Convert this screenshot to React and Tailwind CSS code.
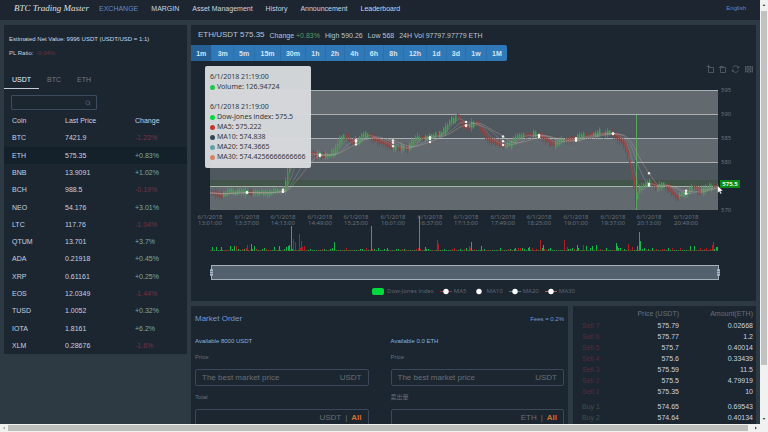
import React, { useState } from 'react';
import { Search } from 'lucide-react';

const NAV = ['EXCHANGE', 'MARGIN', 'Asset Management', 'History', 'Announcement', 'Leaderboard'];
const INTERVALS = ['1m', '3m', '5m', '15m', '30m', '1h', '2h', '4h', '6h', '8h', '12h', '1d', '3d', '1w', '1M'];

const COINS = [
  ['BTC', '7421.9', '-1.23%'],
  ['ETH', '575.35', '+0.83%'],
  ['BNB', '13.9091', '+1.02%'],
  ['BCH', '988.5', '-0.19%'],
  ['NEO', '54.176', '+3.01%'],
  ['LTC', '117.76', '-1.04%'],
  ['QTUM', '13.701', '+3.7%'],
  ['ADA', '0.21918', '+0.45%'],
  ['XRP', '0.61161', '+0.25%'],
  ['EOS', '12.0349', '-1.44%'],
  ['TUSD', '1.0052', '+0.32%'],
  ['IOTA', '1.8161', '+6.2%'],
  ['XLM', '0.28676', '-1.6%'],
];

const SELLS = [
  ['Sell 7', '575.79', '0.02668'],
  ['Sell 6', '575.77', '1.2'],
  ['Sell 5', '575.7', '0.40014'],
  ['Sell 4', '575.6', '0.33439'],
  ['Sell 3', '575.59', '11.5'],
  ['Sell 2', '575.5', '4.79919'],
  ['Sell 1', '575.35', '10'],
];

const BUYS = [
  ['Buy 1', '574.65', '0.69543'],
  ['Buy 2', '574.64', '0.40134'],
];

const TOOLTIP_ROWS = [
  ['#00da3c', 'Dow-Jones index: 575.5'],
  ['#c23531', 'MA5: 575.222'],
  ['#2f4554', 'MA10: 574.838'],
  ['#61a0a8', 'MA20: 574.3665'],
  ['#d48265', 'MA30: 574.4256666666666'],
];

const TIMES = ['13:01', '13:37', '14:13', '14:49', '15:25', '16:01', '16:37', '17:13', '17:49', '18:25', '19:01', '19:37', '20:13', '20:49'];

// price shape, chart coordinates
const SHAPE = [
  [210, 193], [220, 195], [230, 192], [240, 192], [250, 193], [262, 193], [272, 192], [284, 189], [286, 186],
  [288, 168], [292, 160], [300, 155], [310, 153], [318, 156], [330, 155], [337, 147], [341, 139], [345, 136],
  [352, 142], [358, 141], [362, 135], [370, 136], [378, 140], [390, 146], [400, 148], [408, 149], [413, 142],
  [418, 138], [430, 137], [440, 134], [446, 127], [452, 120], [457, 116], [462, 125], [468, 128], [475, 122],
  [481, 130], [485, 136], [490, 140], [500, 145], [508, 146], [513, 141], [520, 136], [530, 135], [540, 135],
  [547, 140], [553, 145], [560, 141], [570, 139], [580, 137], [590, 135], [600, 133], [610, 133], [616, 136],
  [622, 141], [626, 150], [629, 165], [633, 184], [636, 198], [639, 188], [643, 185], [650, 183], [656, 188],
  [664, 184], [668, 188], [673, 194], [677, 197], [685, 193], [693, 187], [700, 191], [710, 187], [718, 186],
];

const noise = (n) => {
  const v = Math.sin(n * 12.9898) * 43758.5453;
  return v - Math.floor(v);
};

function priceAt(x) {
  for (let i = 1; i < SHAPE.length; i++) {
    const [x0, y0] = SHAPE[i - 1];
    const [x1, y1] = SHAPE[i];
    if (x <= x1) return y0 + ((y1 - y0) * (x - x0)) / (x1 - x0);
  }
  return 186;
}

const candles = [];
for (let x = 211; x < 718; x += 2) {
  const slope = priceAt(x + 2) - priceAt(x - 2);
  const up = slope + (noise(Math.floor(x / 4)) - 0.5) * 3 < 0;
  const body = 2 + noise(x + 0.3) * 4 + Math.min(Math.abs(slope) / 2, 6);
  const wick = body + 1 + noise(x + 0.7) * 6;
  candles.push({ x, mid: priceAt(x) + (noise(x + 0.9) - 0.5) * 3, body, wick, up });
}

function average(x, n) {
  let sum = 0;
  for (let i = 0; i < n; i++) sum += priceAt(Math.max(210, x - i));
  return sum / n;
}

const AVERAGES = [
  [5, '#b5584f'],
  [10, '#8f9ba3'],
  [20, '#8fb0b5'],
  [30, '#d4a898'],
].map(([n, color]) => {
  let d = '';
  for (let x = 210; x <= 718; x += 2) d += `${d ? 'L' : 'M'}${x} ${average(x, n).toFixed(1)}`;
  return { n, color, d };
});

// tall volume bars: x, height, rising
const SPIKES = [
  [221, 4, true], [247, 6, false], [251, 7, true], [279, 5, true], [289, 6, true], [291, 25, true],
  [293, 12, false], [295, 9, false], [299, 17, false], [301, 10, false], [304, 5, false], [334, 9, true],
  [371, 25, true], [387, 3, true], [419, 35, true], [425, 4, true], [437, 11, false], [438, 7, false],
  [469, 5, false], [471, 9, true], [481, 5, true], [515, 3, true], [529, 4, true], [540, 11, false],
  [543, 6, true], [564, 11, false], [567, 4, false], [577, 6, true], [583, 6, false], [586, 5, true],
  [592, 5, true], [596, 6, true], [616, 8, true], [617, 5, true], [628, 7, false], [632, 4, false],
  [637, 5, true], [639, 19, true], [640, 10, true], [690, 5, true], [694, 5, true], [712, 6, false],
  [713, 9, false], [716, 4, true], [717, 4, true],
];

const volumes = [];
for (let x = 210; x < 718; x += 2) {
  const busy = x < 308 || (x > 570 && x < 600) || x > 705;
  volumes.push([x, 1 + Math.floor(noise(x + 0.5) ** 3 * (busy ? 5 : 3)), noise(x + 0.2) > 0.5]);
}

const DOTS = TIMES.slice(1).map((t, i) => Math.round(210 + (i + 1) * 36.6));

function Chart() {
  return (
    <svg viewBox="191 61 565 223" className="block w-full font-['Noto_Sans',sans-serif]">
      {/* toolbox */}
      <g fill="none" stroke="#59626b" strokeWidth="0.8">
        <path d="M708.500 67.500h5v5h-5zM706.800 66.500h3M708.500 64.800v3" />
        <path d="M725.500 67.500v5h-5v-5zM719 68.200l1.500-2 1.500 2M720.500 66.500h3" />
        <path d="M732.800 67.500a3 3 0 0 1 5.400 0M738.400 70.500a3 3 0 0 1-5.600 0M738.800 66v2h-1.800M732.200 72v-2h1.800" />
        <path d="M745.500 66v6.500M752.500 66v6.500M747 66.500h4v5.500h-4zM747 66.500l4 5.500M751 66.500l-4 5.500" />
      </g>

      {/* bands and grid */}
      {[90, 114, 138, 162, 186].map((y, i) => (
        <rect key={y} x="210" y={y} width="508" height="24" fill={i % 2 ? '#50585f' : '#62696f'} />
      ))}
      <rect x="210" y="180" width="508" height="6" fill="#43544b" />
      {[90, 114, 138, 162].map((y) => (
        <rect key={y} x="210" y={y} width="508" height="1" fill="#aab0b4" />
      ))}
      <rect x="210" y="186" width="508" height="1" fill="#a3b8a6" />

      {/* candles */}
      {candles.map((c) => (
        <g key={c.x} fill={c.up ? '#2db34a' : '#b8302c'}>
          <rect x={c.x} y={c.mid - c.wick / 2} width="1" height={c.wick} opacity="0.6" />
          <rect x={c.x} y={c.mid - c.body / 2} width="1.500" height={c.body} opacity="0.85" />
        </g>
      ))}
      <rect x="287" y="160" width="1" height="28" fill="#2fa344" />
      <rect x="635" y="160" width="1" height="48" fill="#a8302c" />
      <rect x="636" y="115" width="1" height="95" fill="#5aa85c" />

      {AVERAGES.map((a) => (
        <path key={a.n} d={a.d} fill="none" stroke={a.color} strokeWidth="0.7" opacity="0.5" />
      ))}
      {DOTS.map((x) =>
        [5, 20, 30].map((n) => <circle key={`${x}-${n}`} cx={x} cy={average(x, n)} r="1.200" fill="#f1f1ee" />)
      )}

      {/* axis labels */}
      <g fontSize="6" fill="#66707a">
        {[595, 590, 585, 580].map((p, i) => (
          <text key={p} x="721" y={92 + i * 24}>{p}</text>
        ))}
        <text x="721" y="212">570</text>
        {TIMES.map((t, i) => (
          <g key={t} textAnchor="middle">
            <text x={Math.round(210 + i * 36.6)} y="219">6/1/2018</text>
            <text x={Math.round(210 + i * 36.6)} y="225">{t}:00</text>
          </g>
        ))}
      </g>

      {/* last price */}
      <rect x="720" y="180" width="20" height="8" fill="#0b8a14" />
      <text x="730" y="186" fontSize="6" fontWeight="700" fill="#e9f5e9" textAnchor="middle">575.5</text>

      {/* volume */}
      {[...volumes, ...SPIKES].map(([x, h, up], i) => (
        <rect key={i} x={x} y={251 - h} width="1" height={h} fill={up ? '#18b848' : '#b81c20'} />
      ))}
      <rect x="210" y="250" width="508" height="1" fill="#3d6a3c" opacity="0.5" />

      {/* zoom slider */}
      <rect x="211" y="265" width="508" height="15" fill="#53616e" />
      <path d="M211 265.500h508M211 279.500h508M211.500 265v15M718.500 265v15" stroke="#a3afb9" />
      <rect x="210" y="269" width="3" height="7" rx="1" fill="#a7b7cc" />
      <rect x="717" y="269" width="3" height="7" rx="1" fill="#a7b7cc" />
      <path d="M210 271.500h3M210 273.500h3M717 271.500h3M717 273.500h3" stroke="#5b6875" strokeWidth="0.6" />

      {/* pointer */}
      <path d="M717.500 185.500v7.500l1.800-1.500 1.200 2.500 1.300-.600-1.200-2.400h2.300z" fill="#fff" stroke="#30363b" strokeWidth="0.4" />
    </svg>
  );
}

function Legend() {
  return (
    <div className="flex h-[14px] items-center justify-center gap-[6px] font-['Noto_Sans',sans-serif] text-[6px] leading-none text-[#5c656f]">
      <span className="flex items-center gap-[3px]">
        <span className="h-[7px] w-[12px] rounded-[2px] bg-[#00da3c]" />
        Dow-Jones index
      </span>
      {[['MA5', '#c23531'], ['MA10', '#1c2630'], ['MA20', '#61a0a8'], ['MA30', '#d48265']].map(([name, color]) => (
        <span key={name} className="flex items-center gap-[2px]">
          <svg viewBox="0 0 12 7" className="h-[7px] w-[12px]">
            <path d="M0 3.500h12" stroke={color} opacity="0.7" />
            <circle cx="6" cy="3.500" r="2.700" fill="#fff" />
          </svg>
          {name}
        </span>
      ))}
    </div>
  );
}

function Tooltip() {
  return (
    <div className="absolute left-[14px] top-[5px] w-[106px] rounded-[2px] bg-[#d8dadd]/97 px-[5px] py-[6px] font-['Noto_Sans',sans-serif] text-[7px] leading-[10px] whitespace-nowrap text-[#33383d]">
      <div>6/1/2018 21:19:00</div>
      <div className="flex items-center gap-[2px]">
        <span className="h-[5px] w-[5px] rounded-full bg-[#1fc74b]" />
        Volume: 126.94724
      </div>
      <div className="mt-[10px]">6/1/2018 21:19:00</div>
      {TOOLTIP_ROWS.map(([color, text]) => (
        <div key={text} className="flex items-center gap-[2px]">
          <span className="h-[5px] w-[5px] rounded-full" style={{ background: color }} />
          {text}
        </div>
      ))}
    </div>
  );
}

function OrderField({ id, label, unit, placeholder, all }) {
  return (
    <div>
      <label htmlFor={id} className="block text-[6px] leading-[8px] text-[#66707a]">{label}</label>
      <div className="mt-[8px] flex h-[17px] items-center rounded-[2px] border border-[#3b4858] px-[6px] text-[8px] leading-none text-[#66707a]">
        <input
          id={id}
          type="text"
          placeholder={placeholder}
          className="min-w-0 flex-1 bg-transparent outline-none placeholder:text-[#66707a]"
        />
        <span>{unit}</span>
        {all && (
          <>
            <span className="mx-[4px]">|</span>
            <button type="button" className="font-bold text-[#cf6f2e]">All</button>
          </>
        )}
      </div>
    </div>
  );
}

function OrderRows({ rows, tone }) {
  return rows.map(([name, price, amount]) => (
    <tr key={name} className="h-[11px]">
      <td className={`pl-[9px] ${tone}`}>{name}</td>
      <td className="text-right text-[#c6d3e4]">{price}</td>
      <td className="pr-[3px] text-right text-[#c6d3e4]">{amount}</td>
    </tr>
  ));
}

function Sidebar() {
  const [market, setMarket] = useState('USDT');

  return (
    <aside className="w-[183px] shrink-0 self-start bg-[#1c2630] pt-[9px] text-[#c3d1e0]">
      <p className="pl-[5px] text-[6px] leading-[10px] text-[#c8daea]">Estimated Net Value: 9996 USDT (USDT/USD = 1:1)</p>
      <p className="mt-[4px] pl-[5px] text-[6px] leading-[10px]">
        PL Ratio: <span className="ml-[1px] text-[#6b3040]">-0.04%</span>
      </p>

      <div className="mt-[12px] flex">
        {['USDT', 'BTC', 'ETH'].map((m) => (
          <button
            key={m}
            type="button"
            onClick={() => setMarket(m)}
            className={`h-[19px] border-b px-[8px] ${
              market === m ? 'border-[#c3ccd4] text-[#eef3f8]' : 'border-transparent text-[#6f7b88]'
            }`}
          >
            {m}
          </button>
        ))}
      </div>

      <div className="mt-[6px] ml-[7px] flex h-[15px] w-[86px] items-center rounded-[1px] border border-[#3d4b5e] px-[5px]">
        <input type="text" aria-label="Search coin" className="min-w-0 flex-1 bg-transparent outline-none" />
        <Search className="h-[6px] w-[6px] text-[#5d7398]" />
      </div>

      <table className="mt-[2px] h-[242px] w-full table-fixed text-left">
        <tbody>
          <tr className="h-[17px]">
            <th scope="col" className="w-[61px] pl-[8px] font-normal">Coin</th>
            <th scope="col" className="w-[70px] font-normal">Last Price</th>
            <th scope="col" className="font-normal">Change</th>
          </tr>
          {COINS.map(([coin, price, change]) => (
            <tr key={coin} className={coin === 'ETH' ? 'h-[17px] bg-[#14212b]' : 'h-[17px]'}>
              <td className="pl-[8px]">{coin}</td>
              <td>{price}</td>
              <td className={change[0] === '-' ? 'text-[#733446]' : 'text-[#7cab9a]'}>{change}</td>
            </tr>
          ))}
        </tbody>
      </table>
    </aside>
  );
}

export default function App() {
  const [interval, setInterval] = useState('1m');

  return (
    <div className="flex h-screen flex-col overflow-hidden bg-[#2d3a43] font-['Liberation_Sans','Noto_Sans_CJK_SC',sans-serif] text-[7px] leading-none">
      <div className="flex min-h-0 flex-1">
        <div className="flex min-w-0 flex-1 flex-col overflow-hidden">
          {/* Header */}
          <header className="flex h-[20px] shrink-0 items-center bg-[#1c2530] px-[14px] pb-[4px] text-[#c9d5e2]">
            <span className="w-[85px] font-['Liberation_Serif',serif] text-[9px] whitespace-nowrap text-[#dbe2e8] italic">BTC Trading Master</span>
            <nav className="flex flex-1 gap-[13px] whitespace-nowrap">
              {NAV.map((item) => (
                <a key={item} href="#" className={item === 'EXCHANGE' ? 'text-[#6688c4]' : ''}>{item}</a>
              ))}
            </nav>
            <a href="#" className="text-[6px] text-[#6688c4]">English</a>
          </header>

          <div className="flex items-start gap-[4px] px-[4px] pt-[5px]">
            <Sidebar />

            <main className="min-w-0 flex-1">
              {/* Price chart */}
              <section className="bg-[#1c2630] pb-[3px]">
                <div className="flex h-[20px] items-center gap-[5px] pl-[7px] text-[#b6c4d4]">
                  <h1 className="text-[8px]">ETH/USDT 575.35</h1>
                  <span>Change <span className="text-[#5a9c62]">+0.83%</span></span>
                  <span>High 590.26</span>
                  <span>Low 568</span>
                  <span>24H Vol 97797.97779 ETH</span>
                </div>
                <div className="flex h-[16px] w-[316px]">
                  {INTERVALS.map((t) => (
                    <button
                      key={t}
                      type="button"
                      onClick={() => setInterval(t)}
                      className={`grow border-r border-[#2c6fab] px-[5px] font-bold text-[#d5e4f2] last:rounded-r-[2px] last:border-r-0 ${
                        interval === t ? 'bg-[#265f94]' : 'bg-[#3079b8]'
                      }`}
                    >
                      {t}
                    </button>
                  ))}
                </div>
                <div className="relative">
                  <Chart />
                  <Tooltip />
                </div>
                <Legend />
              </section>

              <div className="mt-[5px] flex items-stretch gap-[5px]">
                {/* Order form */}
                <section className="min-w-0 flex-1 bg-[#1c2630] px-[4px] pt-[8px] pb-[30px]">
                  <div className="flex items-center justify-between text-[#7399d6]">
                    <h2 className="text-[8px] leading-[9px]">Market Order</h2>
                    <span className="text-[6px]">Fees = 0.2%</span>
                  </div>
                  <div className="mt-[14px] grid grid-cols-2 gap-[22px]">
                    <div>
                      <p className="mb-[8px] text-[6px] leading-[8px] text-[#86b4dc]">Available 8000 USDT</p>
                      <OrderField id="buy-price" label="Price" unit="USDT" placeholder="The best market price" />
                      <div className="mt-[7px]">
                        <OrderField id="buy-total" label="Total" unit="USDT" all />
                      </div>
                    </div>
                    <div>
                      <p className="mb-[8px] text-[6px] leading-[8px] text-[#86b4dc]">Available 0.0 ETH</p>
                      <OrderField id="sell-price" label="Price" unit="USDT" placeholder="The best market price" />
                      <div className="mt-[7px]">
                        <OrderField id="sell-amount" label="卖出量" unit="ETH" all />
                      </div>
                    </div>
                  </div>
                </section>

                {/* Order book */}
                <section className="w-[183px] shrink-0 bg-[#1c2630] pt-[1px]">
                  <table className="w-full table-fixed">
                    <thead>
                      <tr className="h-[13px] text-right text-[#66707b]">
                        <th className="w-[35px]" aria-label="Side" />
                        <th className="w-[71px] font-normal">Price (USDT)</th>
                        <th className="pr-[3px] font-normal">Amount(ETH)</th>
                      </tr>
                    </thead>
                    <tbody>
                      <OrderRows rows={SELLS} tone="text-[#5a2a3a]" />
                    </tbody>
                    <tbody className="before:block before:h-[4px]">
                      <OrderRows rows={BUYS} tone="text-[#3a5348]" />
                    </tbody>
                  </table>
                </section>
              </div>
            </main>
          </div>
        </div>

        {/* Vertical scrollbar */}
        <div className="flex w-[8px] shrink-0 flex-col items-center bg-[#f1f1f1]">
          <svg viewBox="0 0 8 11" className="h-[11px] w-[8px] shrink-0"><path d="M2.500 6L4 4l1.500 2z" fill="#505050" /></svg>
          <div className="w-[6px] flex-[88] bg-[#c1c1c1]" />
          <div className="flex-[12]" />
          <svg viewBox="0 0 8 11" className="h-[11px] w-[8px] shrink-0"><path d="M2.500 5L4 7l1.500-2z" fill="#505050" /></svg>
        </div>
      </div>

      {/* Horizontal scrollbar */}
      <div className="flex h-[8px] shrink-0 items-center bg-[#f1f1f1] pr-[8px]">
        <svg viewBox="0 0 8 8" className="h-[8px] w-[8px] shrink-0"><path d="M5 2.500L3 4l2 1.500z" fill="#a3a3a3" /></svg>
        <div className="h-[6px] flex-1 bg-[#bdbfbd]" />
        <svg viewBox="0 0 12 8" className="h-[8px] w-[12px] shrink-0"><path d="M7 2.500L9 4 7 5.500z" fill="#505050" /></svg>
      </div>
    </div>
  );
}
